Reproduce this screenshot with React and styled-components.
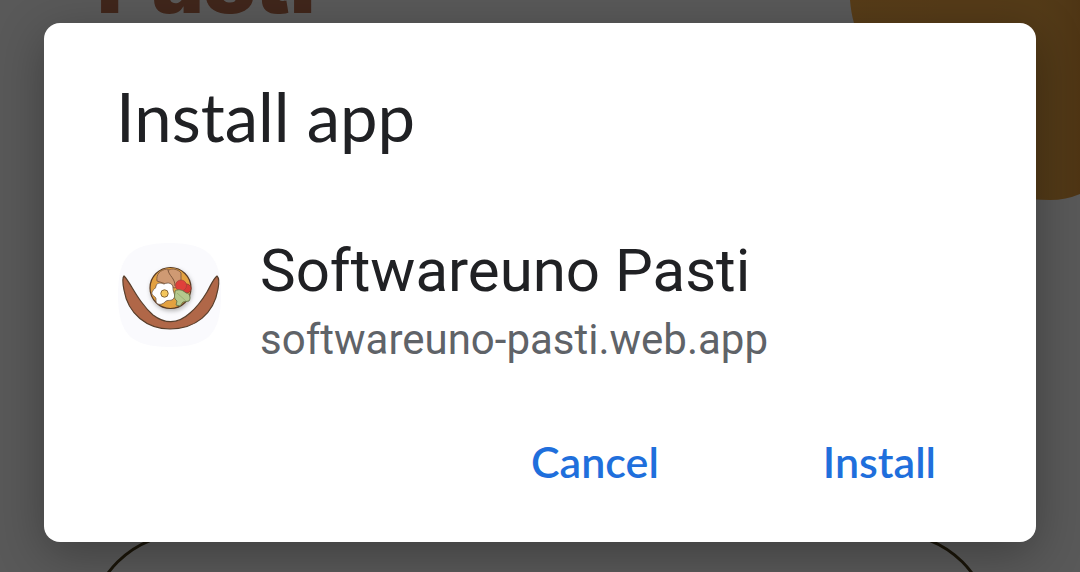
import React from "react";
import styled, { createGlobalStyle } from "styled-components";

const GlobalStyle = createGlobalStyle`
  *, *::before, *::after { box-sizing: border-box; }
  body { margin: 0; background: #595959; font-family: Roboto, "Liberation Sans", sans-serif; }
`;

const Screen = styled.div`
  position: relative;
  min-height: 100vh;
  overflow: hidden;
  background: #fff;
`;

const Backdrop = styled.div`
  position: absolute;
  inset: 0;
  overflow: hidden;
  display: flex;
  flex-direction: column;
`;

const Hero = styled.div`
  display: flex;
  justify-content: space-between;
  align-items: flex-start;
  height: 532px;
  flex-shrink: 0;
  padding-left: 97px;
`;

const HeroTitle = styled.h2`
  margin: -68px 0 0;
  font: 900 87px/100px Inter, "Liberation Sans", sans-serif;
  color: #b76d4d;
`;

const BackCard = styled.div`
  flex-shrink: 0;
  height: 400px;
  margin: 0 88px;
  border: 3px solid #4b3d1c;
  border-radius: 98px;
`;

const Scrim = styled.div`
  position: relative;
  min-height: 100vh;
  padding: 23px 44px 30px;
  background: rgba(0, 0, 0, 0.65);
`;

const Dialog = styled.div`
  padding: 53px 60px 36px 72px;
  border-radius: 16px;
  background: #fff;
  box-shadow: 0 12px 48px rgba(0, 0, 0, 0.3);
`;

const Title = styled.h1`
  margin: 0;
  font: 400 67px/80px Lato, sans-serif;
  color: #202124;
`;

const AppRow = styled.div`
  display: flex;
  align-items: flex-start;
  gap: 38px;
  margin-top: 86px;
`;

const AppText = styled.div`
  display: flex;
  flex-direction: column;
  gap: 12px;
`;

const AppName = styled.div`
  font-size: 60px;
  line-height: 58px;
  color: #202124;
`;

const AppHost = styled.div`
  font-size: 42px;
  line-height: 56px;
  color: #5f6368;
`;

const Actions = styled.div`
  display: flex;
  justify-content: flex-end;
  gap: 84px;
  margin-top: 50px;
`;

const Action = styled.button`
  padding: 8px 40px;
  border: 0;
  border-radius: 8px;
  background: none;
  font: 600 43px/72px Lato, sans-serif;
  color: #1f6fdc;
  cursor: pointer;
`;

function FoodShape() {
  return (
    <svg width="232" height="202" viewBox="0 0 232 202" aria-hidden="true">
      <defs>
        <linearGradient id="crust" x1="0" x2="1">
          <stop offset="0" stopColor="#f8ab47" />
          <stop offset="0.8" stopColor="#f0a945" />
          <stop offset="0.9" stopColor="#eaa444" />
          <stop offset="1" stopColor="#e0983a" />
        </linearGradient>
      </defs>
      <path d="M2 0 Q3 13 6 23 Q40 150 150 192 Q174 200 202 200 Q218 200 232 194 V0Z" fill="url(#crust)" />
    </svg>
  );
}

function AppIcon() {
  return (
    <svg width="106" height="106" viewBox="6 7 106 106" role="img" aria-label="Softwareuno Pasti">
      <defs>
        <filter id="plateShadow" x="-20%" y="-20%" width="150%" height="150%">
          <feDropShadow dx="1" dy="2" stdDeviation="2" floodColor="#000" floodOpacity="0.28" />
        </filter>
      </defs>
      <path d="M59.500 8 C98 8 111 21 111 60 C111 99 98 112 59.500 112 C21 112 8 99 8 60 C8 21 21 8 59.500 8Z" fill="#fafafd" />
      <path d="M14 41 C12 43 13 50 14 55 C18 79 37 94 60 94 C85 94 104 79 108 54 C109 49 109 43 107 41 C103 44 100 52 97 57 C91 67 86 73 80 78 C67 90 55 89 43 80 C36 74 33 69 30 65 C24 57 19 46 14 41Z" fill="#b06748" stroke="#573e2b" strokeWidth="1.200" strokeLinejoin="round" />
      <circle cx="60.500" cy="53" r="20.500" fill="#e3a13f" stroke="#593b25" strokeWidth="1.200" filter="url(#plateShadow)" />
      <path d="M47 46 C46 39 50 35 57 34 L59 35 C62 33 68 34 71 38 L71 49 L65 53 L56 49Z" fill="#cf9a73" stroke="#8a6040" strokeWidth="1" />
      <path d="M58 35 C59 41 65 43 65 51" fill="none" stroke="#7d573b" strokeWidth="1" />
      <path d="M46 51 C47 47 51 48 54 49 C58 47 63 48 63 53 C63 58 66 60 64 63 C62 67 57 64 55 67 C51 71 45 70 46 64 C46 61 41 61 42 57 C43 54 46 54 46 51Z" fill="#fff" stroke="#6e5644" strokeWidth="0.800" />
      <circle cx="54.500" cy="58.500" r="3.700" fill="#f4c65b" stroke="#7b5a2f" strokeWidth="0.900" />
      <circle cx="76.500" cy="53.500" r="4.500" fill="#d93a36" stroke="#8d3a2c" strokeWidth="0.800" />
      <circle cx="71" cy="50.500" r="5.500" fill="#df403b" stroke="#a0403a" strokeWidth="0.700" />
      <path d="M65 56 C69 53 74 56 76 58 C80 58 81 63 79 66 L73 67 L70 71 L66 70 L67 66 C63 63 65 60 65 56Z" fill="#b5c88d" stroke="#66744a" strokeWidth="0.900" strokeLinejoin="round" />
      <path d="M67 58 L76 66" fill="none" stroke="#93a970" strokeWidth="0.800" />
    </svg>
  );
}

export default function App() {
  return (
    <Screen>
      <GlobalStyle />
      <Backdrop aria-hidden="true">
        <Hero>
          <HeroTitle>Pasti</HeroTitle>
          <FoodShape />
        </Hero>
        <BackCard />
      </Backdrop>
      <Scrim>
        <Dialog role="dialog" aria-modal="true" aria-labelledby="install-title">
          <Title id="install-title">Install app</Title>
          <AppRow>
            <AppIcon />
            <AppText>
              <AppName>Softwareuno Pasti</AppName>
              <AppHost>softwareuno-pasti.web.app</AppHost>
            </AppText>
          </AppRow>
          <Actions>
            <Action type="button">Cancel</Action>
            <Action type="button">Install</Action>
          </Actions>
        </Dialog>
      </Scrim>
    </Screen>
  );
}
